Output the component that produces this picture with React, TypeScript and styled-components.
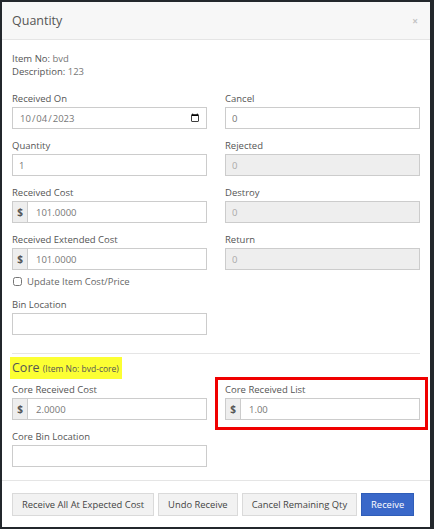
import React from 'react';
import styled, { createGlobalStyle } from 'styled-components';

const GlobalStyle = createGlobalStyle`
  html, body {
    margin: 0;
    padding: 0;
    background: #23272c;
  }
  body {
    font-family: 'Open Sans', 'Liberation Sans', sans-serif;
    color: #555;
  }
`;

interface FieldProps {
  label: string;
  value?: string;
  money?: boolean;
  disabled?: boolean;
  flagged?: boolean;
}

const Field: React.FC<FieldProps> = ({ label, value = '', money, disabled, flagged }: FieldProps) => (
  <Group $flagged={flagged}>
    <Label>{label}</Label>
    {money ? (
      <InputGroup>
        <Addon>$</Addon>
        <Input readOnly value={value} $joined />
      </InputGroup>
    ) : (
      <Input readOnly value={value} disabled={disabled} />
    )}
  </Group>
);

const App: React.FC = () => {
  return (
    <>
      <GlobalStyle />
      <Modal>
        <Header>
          <Title>Quantity</Title>
          <Close>×</Close>
        </Header>
        <Body>
          <Info>
            <div>
              <b>Item No:</b> bvd
            </div>
            <div>
              <b>Description:</b> 123
            </div>
          </Info>
          <Grid>
            <Column>
              <Group>
                <Label>Received On</Label>
                <DateInput type="date" defaultValue="2023-10-04" />
              </Group>
              <Field label="Quantity" value="1" />
              <Field label="Received Cost" value="101.0000" money />
              <Field label="Received Extended Cost" value="101.0000" money />
              <CheckRow>
                <Check type="checkbox" />
                <span>Update Item Cost/Price</span>
              </CheckRow>
              <Field label="Bin Location" />
            </Column>
            <Column>
              <Field label="Cancel" value="0" />
              <Field label="Rejected" value="0" disabled />
              <Field label="Destroy" value="0" disabled />
              <Field label="Return" value="0" disabled />
            </Column>
          </Grid>
          <Divider />
          <CoreHeading>
            Core <small>(Item No: bvd-core)</small>
          </CoreHeading>
          <Grid>
            <Column>
              <Field label="Core Received Cost" value="2.0000" money />
              <Field label="Core Bin Location" />
            </Column>
            <Column>
              <Field label="Core Received List" value="1.00" money flagged />
            </Column>
          </Grid>
        </Body>
        <Footer>
          <Button>Receive All At Expected Cost</Button>
          <Button>Undo Receive</Button>
          <Button>Cancel Remaining Qty</Button>
          <Button $primary>Receive</Button>
        </Footer>
      </Modal>
    </>
  );
};

export default App;

const Modal = styled.div`
  margin: 2px 0 0 2px;
  width: 428px;
  height: 525px;
  background: #fff;
  display: flex;
  flex-direction: column;
  box-sizing: border-box;
`;

const Header = styled.div`
  height: 37px;
  background: #f7f7f7;
  border-bottom: 1px solid #e5e5e5;
  display: flex;
  align-items: center;
  justify-content: space-between;
  padding: 0 12px 0 10px;
  flex-shrink: 0;
`;

const Title = styled.h4`
  margin: 0;
  font-size: 12.5px;
  font-weight: 400;
  color: #555;
`;

const Close = styled.span`
  font-size: 10px;
  color: #c4c4c4;
  font-weight: 700;
`;

const Body = styled.div`
  flex: 1;
  padding: 12px 10px 0;
`;

const Info = styled.div`
  font-size: 9.5px;
  line-height: 13px;
  color: #777;
  margin-bottom: 14px;

  b {
    font-weight: 400;
    color: #555;
  }
`;

const Grid = styled.div`
  display: grid;
  grid-template-columns: 195px 195px;
  column-gap: 18px;
`;

const Column = styled.div`
  display: flex;
  flex-direction: column;
`;

const Group = styled.div<{ $flagged?: boolean }>`
  position: relative;
  margin-bottom: 10px;

  ${({ $flagged }) =>
    $flagged &&
    `
    &::after {
      content: '';
      position: absolute;
      top: -6px;
      left: -10px;
      right: -8px;
      bottom: -10px;
      border: 3px solid #f00000;
      pointer-events: none;
    }
  `}
`;

const Label = styled.label`
  display: block;
  font-size: 9.5px;
  line-height: 14px;
  margin-bottom: 1px;
  color: #555;
`;

const Input = styled.input<{ $joined?: boolean }>`
  display: block;
  box-sizing: border-box;
  width: 100%;
  height: 22px;
  padding: 0 6px;
  border: 1px solid #ccc;
  border-radius: 0;
  font-family: inherit;
  font-size: 9.5px;
  color: #777;
  background: #fff;
  outline: none;

  &:disabled {
    background: #eeeeee;
    color: #aaa;
  }

  ${({ $joined }) => $joined && 'flex: 1; min-width: 0; padding-left: 8px;'}
`;

const DateInput = styled(Input)`
  padding-right: 6px;
  &::-webkit-calendar-picker-indicator {
    width: 10px;
    height: 10px;
    margin: 0;
    padding: 0;
    opacity: 1;
  }
`;

const InputGroup = styled.div`
  display: flex;
  height: 22px;
`;

const Addon = styled.span`
  width: 15px;
  flex-shrink: 0;
  box-sizing: border-box;
  display: flex;
  align-items: center;
  justify-content: center;
  background: #eee;
  border: 1px solid #ccc;
  border-right: 0;
  font-size: 10px;
  font-weight: 700;
  color: #555;
`;

const CheckRow = styled.label`
  display: flex;
  align-items: center;
  gap: 5px;
  font-size: 9.5px;
  color: #666;
  margin: -6px 0 10px 1px;
  height: 14px;
`;

const Check = styled.input`
  margin: 0;
  width: 9px;
  height: 9px;
`;

const Divider = styled.hr`
  margin: 8px 0 1px;
  border: 0;
  border-top: 1px solid #e5e5e5;
`;

const CoreHeading = styled.div`
  display: inline-block;
  margin-left: -2px;
  padding: 0 3px 0 2px;
  height: 22px;
  line-height: 22px;
  background: #fcff33;
  font-size: 12.5px;
  color: #555;
  margin-bottom: 4px;

  small {
    font-size: 8.5px;
  }
`;

const Footer = styled.div`
  flex-shrink: 0;
  border-top: 1px solid #e5e5e5;
  padding: 12px 10px 11px;
  display: flex;
  gap: 4px;
`;

const Button = styled.button<{ $primary?: boolean }>`
  height: 23px;
  padding: 0 9px;
  font-family: inherit;
  font-size: 9.4px;
  border-radius: 0;
  border: 1px solid ${({ $primary }) => ($primary ? '#2f5db8' : '#dadada')};
  background: ${({ $primary }) => ($primary ? '#3a68c9' : '#f2f2f2')};
  color: ${({ $primary }) => ($primary ? '#fff' : '#444')};
  white-space: nowrap;
`;
